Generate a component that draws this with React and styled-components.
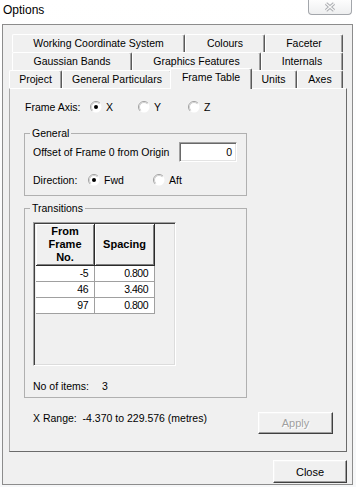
import React from "react"
import styled, { createGlobalStyle } from "styled-components"

const GlobalStyle = createGlobalStyle`
  * { box-sizing: border-box; }
  body {
    margin: 0;
    background: #ffffff;
    font-family: "Liberation Sans", Arial, sans-serif;
  }
`

const Window = styled.div`
  width: 356px;
  height: 487px;
  display: flex;
  flex-direction: column;
  background: linear-gradient(180deg, #ffffff 0%, #f6f7f8 100%);
  color: #000;
  font-size: 10.5px;
`

const TitleBar = styled.div`
  height: 24px;
  display: flex;
  justify-content: space-between;
  align-items: flex-start;
`

const Title = styled.div`
  padding: 3px 0 0 3px;
  font-size: 12px;
  line-height: 14px;
`

const WinClose = styled.div`
  width: 44px;
  height: 15px;
  margin-right: 4px;
  border: 1px solid #a3a6ab;
  border-top: none;
  border-radius: 0 0 4px 4px;
  background: linear-gradient(180deg, #fdfdfd 0%, #eeeff0 100%);
  display: flex;
  align-items: center;
  justify-content: center;
`

const Client = styled.div`
  flex: 1;
  margin: 0 3px 2px 2px;
  border: 1px solid #8c8c8c;
  background: #f0f0f0;
  display: flex;
  flex-direction: column;
  padding: 9px 5px 0 6px;
`

const TabStrip = styled.div`
  display: flex;
  flex-direction: column;
`

const TabRow = styled.div`
  display: flex;
  height: 18px;
  margin-left: ${p => p.$indent || 0}px;
  align-items: flex-end;
`

const Tab = styled.div`
  width: ${p => p.$w}px;
  height: ${p => (p.$active ? 21 : 18)}px;
  margin: ${p => (p.$active ? "0 -2px -1px -2px" : "0")};
  position: relative;
  z-index: ${p => (p.$active ? 2 : 1)};
  border-top: 1px solid #ffffff;
  border-left: 1px solid #ffffff;
  border-right: 1px solid #5a5a5a;
  border-radius: 2px 2px 0 0;
  box-shadow: inset -1px 0 0 #a0a0a0;
  background: #f0f0f0;
  text-align: center;
  line-height: ${p => (p.$active ? 16 : 17)}px;
  white-space: nowrap;
`

const Panel = styled.div`
  height: 364px;
  border: 1px solid;
  border-color: #ffffff #6b6b6b #6b6b6b #a8a8a8;
  background: #f0f0f0;
  display: flex;
  flex-direction: column;
  padding-left: 14px;
`

const AxisRow = styled.div`
  display: flex;
  align-items: center;
  height: 16px;
  margin-top: 10px;
  padding-left: 1px;
`

const Label = styled.span`
  width: ${p => (p.$w ? `${p.$w}px` : "auto")};
  flex-shrink: 0;
  white-space: nowrap;
`

const Option = styled.label`
  display: flex;
  align-items: center;
  gap: 4px;
  width: ${p => p.$w}px;
  flex-shrink: 0;
`

const Group = styled.fieldset`
  width: 223px;
  margin: ${p => p.$top}px 0 0 0;
  padding: ${p => p.$pad};
  border: 1px solid #b0b0b0;
  min-width: 0;
`

const Legend = styled.legend`
  padding: 0 2px;
  margin-left: -3px;
  line-height: 14px;
`

const FieldRow = styled.div`
  display: flex;
  align-items: center;
  justify-content: ${p => p.$spread ? "space-between" : "flex-start"};
  height: ${p => p.$h}px;
  margin-top: ${p => p.$top || 0}px;
`

const NumberInput = styled.div`
  width: 58px;
  height: 20px;
  background: #ffffff;
  border: 1px solid;
  border-color: #a0a0a0 #ffffff #ffffff #a0a0a0;
  box-shadow: inset 1px 1px 0 #696969, inset -1px -1px 0 #e3e3e3;
  text-align: right;
  padding: 0 4px;
  line-height: 18px;
`

const ListBox = styled.div`
  width: 143px;
  height: 144px;
  border: 1px solid;
  border-color: #a0a0a0 #ffffff #ffffff #a0a0a0;
  box-shadow: inset 1px 1px 0 #404040, inset -1px -1px 0 #dcdcdc;
  background: #f0f0f0;
  padding: 1px 0 0 2px;
`

const Grid = styled.div`
  display: grid;
  grid-template-columns: 59px 60px;
`

const Cell = styled.div`
  height: ${p => (p.$head ? 42 : 16)}px;
  display: flex;
  align-items: center;
  justify-content: ${p => (p.$head ? "center" : "flex-end")};
  text-align: center;
  background: ${p => (p.$head ? "#f0f0f0" : "#ffffff")};
  border-right: 1px solid ${p => (p.$head ? "#2a2a2a" : "#a0a0a0")};
  border-bottom: 1px solid ${p => (p.$head ? "#2a2a2a" : "#a0a0a0")};
  box-shadow: ${p =>
    p.$head ? "inset 1px 1px 0 #ffffff, inset -1px -1px 0 #808080" : "none"};
  padding-right: ${p => (p.$head ? 0 : 6)}px;
  font-weight: ${p => (p.$head ? 700 : 400)};
  font-size: ${p => (p.$head ? 11 : 10.5)}px;
  letter-spacing: ${p => (p.$head ? 0 : -0.5)}px;
  line-height: 13px;
`

const ItemsRow = styled.div`
  display: flex;
  height: 16px;
  align-items: center;
  margin-top: 12px;
`

const BottomRow = styled.div`
  display: flex;
  justify-content: space-between;
  align-items: flex-start;
  margin-top: 14px;
  padding: 0 13px 0 9px;
`

const RangeText = styled.span`
  line-height: 12px;
  white-space: pre;
`

const Button = styled.div`
  width: ${p => p.$w}px;
  height: ${p => p.$h}px;
  border: 1px solid;
  border-color: #ffffff #404040 #404040 #ffffff;
  box-shadow: inset -1px -1px 0 #a0a0a0, inset 1px 1px 0 #f4f4f4;
  background: #f0f0f0;
  color: ${p => (p.$disabled ? "#a0a0a0" : "#000000")};
  text-shadow: ${p => (p.$disabled ? "1px 1px 0 #ffffff" : "none")};
  display: flex;
  align-items: center;
  justify-content: center;
  font-size: 11px;
`

const Footer = styled.div`
  display: flex;
  justify-content: flex-end;
  padding-top: 8px;
`

const Radio = ({ checked }) => (
  <svg width="12" height="12" viewBox="0 0 12 12">
    <circle cx="6" cy="6" r="5.5" fill="#ffffff" />
    <path d="M2.1 9.9 A5.5 5.5 0 0 1 9.9 2.1" fill="none" stroke="#a0a0a0" />
    <path d="M2.8 9.2 A4.5 4.5 0 0 1 9.2 2.8" fill="none" stroke="#d0d0d0" />
    {checked && <circle cx="6" cy="6" r="2" fill="#000000" />}
  </svg>
)

const CloseGlyph = () => (
  <svg width="12" height="10" viewBox="0 0 12 10">
    <path d="M2 1.5 L10 8.5 M10 1.5 L2 8.5" stroke="#a9abaf" strokeWidth="3.2" />
    <path d="M2 1.5 L10 8.5 M10 1.5 L2 8.5" stroke="#f7f7f7" strokeWidth="1.4" />
  </svg>
)

const tabRows = [
  {
    indent: 3,
    tabs: [
      ["Working Coordinate System", 173],
      ["Colours", 80],
      ["Faceter", 78],
    ],
  },
  {
    indent: 3,
    tabs: [
      ["Gaussian Bands", 120],
      ["Graphics Features", 129],
      ["Internals", 82],
    ],
  },
  {
    indent: 0,
    tabs: [
      ["Project", 53],
      ["General Particulars", 110],
      ["Frame Table", 82, true],
      ["Units", 47],
      ["Axes", 46],
    ],
  },
]

const transitions = [
  ["-5", "0.800"],
  ["46", "3.460"],
  ["97", "0.800"],
]

const App = () => {
  return (
    <>
      <GlobalStyle />
      <Window>
        <TitleBar>
          <Title>Options</Title>
          <WinClose>
            <CloseGlyph />
          </WinClose>
        </TitleBar>

        <Client>
          <TabStrip>
            {tabRows.map((row, i) => (
              <TabRow key={i} $indent={row.indent}>
                {row.tabs.map(([name, w, active]) => (
                  <Tab key={name} $w={w} $active={active}>
                    {name}
                  </Tab>
                ))}
              </TabRow>
            ))}
          </TabStrip>

          <Panel>
            <AxisRow>
              <Label $w={65}>Frame Axis:</Label>
              <Option $w={48}>
                <Radio checked />X
              </Option>
              <Option $w={50}>
                <Radio />Y
              </Option>
              <Option $w={30}>
                <Radio />Z
              </Option>
            </AxisRow>

            <Group $top={11} $pad="2px 9px 7px 8px">
              <Legend>General</Legend>
              <FieldRow $h={20} $spread>
                <Label>Offset of Frame 0 from Origin</Label>
                <NumberInput>0</NumberInput>
              </FieldRow>
              <FieldRow $h={16} $top={10}>
                <Label $w={55}>Direction:</Label>
                <Option $w={65}>
                  <Radio checked />Fwd
                </Option>
                <Option $w={40}>
                  <Radio />Aft
                </Option>
              </FieldRow>
            </Group>

            <Group $top={5} $pad="7px 9px 3px 8px">
              <Legend>Transitions</Legend>
              <ListBox>
                <Grid>
                  <Cell $head>
                    From
                    <br />
                    Frame
                    <br />
                    No.
                  </Cell>
                  <Cell $head>Spacing</Cell>
                  {transitions.map(([frame, spacing]) => (
                    <React.Fragment key={frame}>
                      <Cell>{frame}</Cell>
                      <Cell>{spacing}</Cell>
                    </React.Fragment>
                  ))}
                </Grid>
              </ListBox>
              <ItemsRow>
                <Label $w={69}>No of items:</Label>
                <span>{transitions.length}</span>
              </ItemsRow>
            </Group>

            <BottomRow>
              <RangeText>X Range:  -4.370 to 229.576 (metres)</RangeText>
              <Button $w={75} $h={22} $disabled>
                Apply
              </Button>
            </BottomRow>
          </Panel>

          <Footer>
            <Button $w={74} $h={23}>
              Close
            </Button>
          </Footer>
        </Client>
      </Window>
    </>
  )
}

export default App
